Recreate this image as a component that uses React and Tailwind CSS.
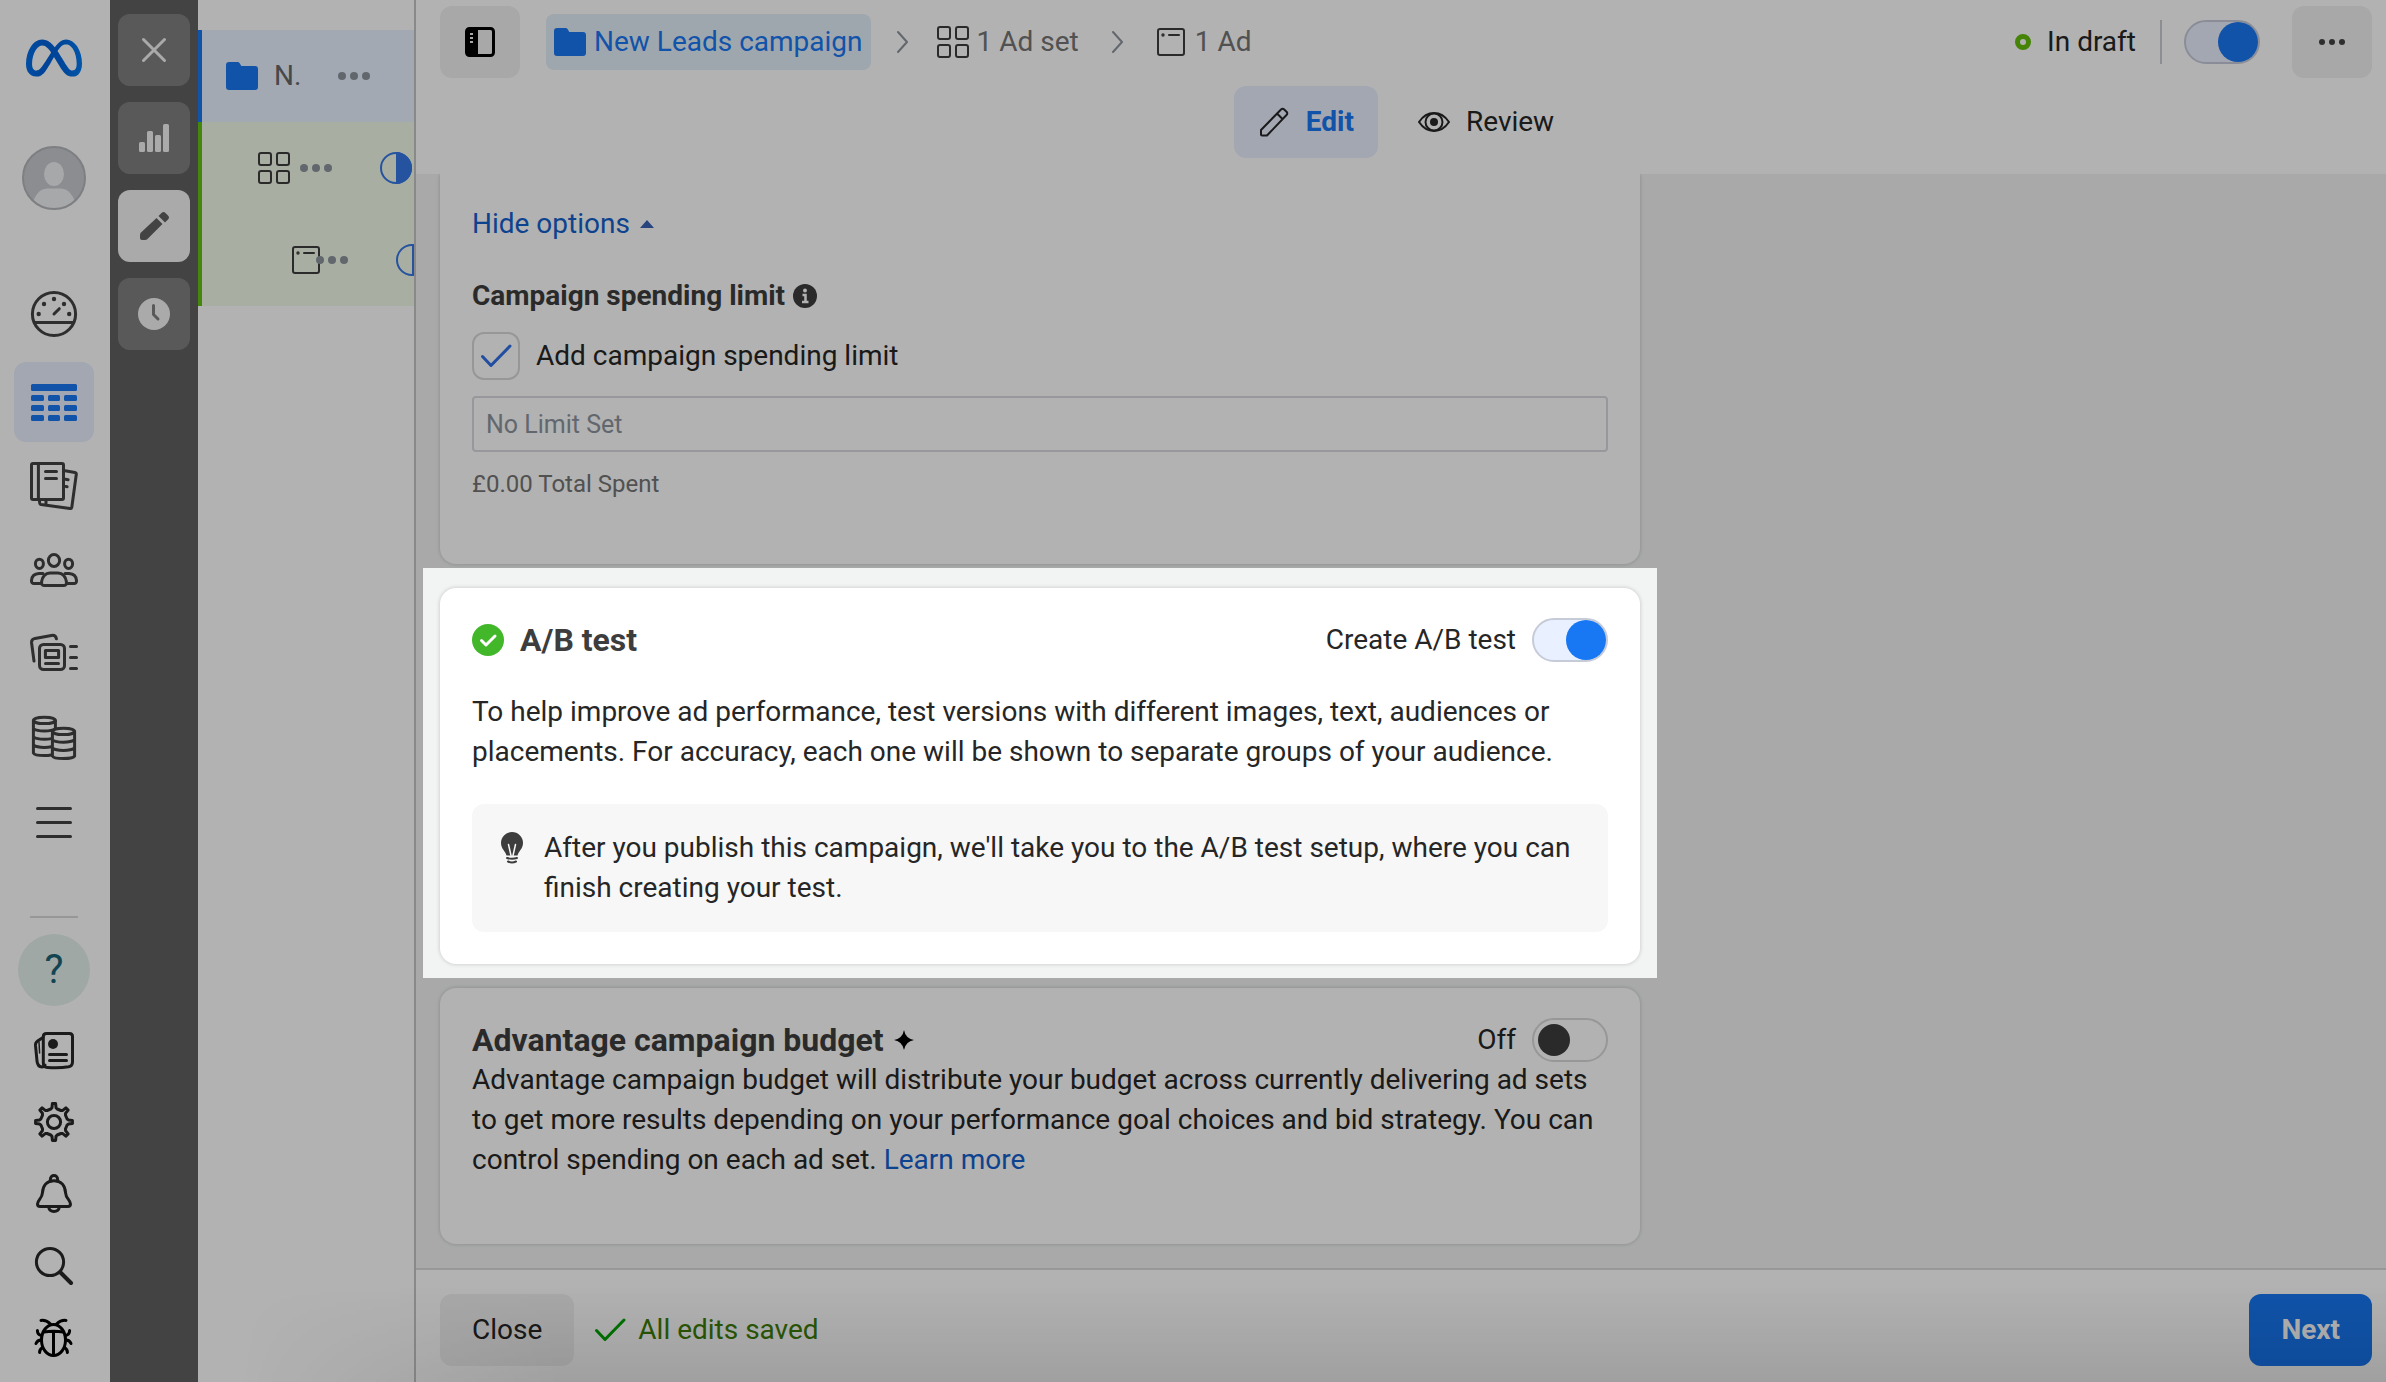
import React, { useState } from "react";
import { SiMeta } from "react-icons/si";

const Icon = ({ children, box = 48, width = 3, className = "w-12 h-12" }) => (
  <svg
    viewBox={`0 0 ${box} ${box}`}
    fill="none"
    stroke="currentColor"
    strokeWidth={width}
    strokeLinecap="round"
    strokeLinejoin="round"
    className={`shrink-0 ${className}`}
    aria-hidden="true"
  >
    {children}
  </svg>
);

const GaugeIcon = () => (
  <Icon>
    <circle cx="24" cy="24" r="21.6" />
    <path d="M5 32.4H43M24 24l5.3-5.3" />
    <g fill="currentColor" stroke="none">
      <circle cx="8.7" cy="24" r="2.2" />
      <circle cx="14" cy="14" r="2.2" />
      <circle cx="24" cy="9" r="2.2" />
      <circle cx="34" cy="14" r="2.2" />
      <circle cx="39.2" cy="24" r="2.2" />
    </g>
  </Icon>
);

const TableIcon = () => (
  <Icon>
    <g fill="currentColor" stroke="none">
      <rect x="1" y="6" width="46" height="7" rx="1.5" />
      {[17, 27, 37].map((y) => (
        <g key={y}>
          <rect x="1" y={y} width="13" height="6" rx="1.5" />
          <rect x="18" y={y} width="12" height="6" rx="1.5" />
          <rect x="34" y={y} width="13" height="6" rx="1.5" />
        </g>
      ))}
    </g>
  </Icon>
);

const BooksIcon = () => (
  <Icon>
    <rect x="1.5" y="1.5" width="32" height="36" rx="1.5" />
    <path d="M8.4 1.5v36M15.5 9.4H26.5M15.5 16.4H26.5" />
    <path d="M35 8.8l10 1.7q1.5.3 1.3 1.8L41.8 45.2q-.3 1.5-1.8 1.3L11 42.6q-1.5-.4-1.5-3.4M16 39v3M35.5 17.2l2.6.5M35.5 24.4l1.6.3" />
  </Icon>
);

const PeopleIcon = () => (
  <Icon>
    <ellipse cx="24" cy="14.4" rx="5.6" ry="6" />
    <ellipse cx="9.4" cy="17.8" rx="4" ry="4.6" />
    <ellipse cx="38.6" cy="17.8" rx="4" ry="4.6" />
    <path d="M14 39.6H34q2.8-.2 2.4-4Q35 27.4 28 27H20q-7 .4-8.4 8.6-.4 3.8 2.4 4Z" />
    <path d="M13 27.6H9Q2 28 1.5 34.5 1.4 37.4 4 37.4H11M35 27.6H39Q46 28 46.5 34.5 46.6 37.4 44 37.4H37" />
  </Icon>
);

const CollectionsIcon = () => (
  <Icon>
    <rect x="9.5" y="14.5" width="25" height="25" rx="4" />
    <rect x="15.4" y="20.4" width="13.2" height="7.2" />
    <path d="M15.5 33.4H28.5M40.5 16.4H46.5M40.5 27.4H46.5M40.5 38.4H46.5" />
    <path d="M26.4 8.8q-.6-4-5-3.4L5 8.4Q1.2 9.2 1.6 13L4 31" />
  </Icon>
);

const CoinsIcon = () => (
  <Icon>
    <ellipse cx="14.4" cy="6.4" rx="11" ry="3.2" />
    <path d="M3.4 6.4V39q1 2.6 11 2.6 4 0 6.6-.6M25.4 6.4V14M3.4 14.6q3 2.4 11 2.4t11-2.4M3.4 22.8q3 2.4 11 2.4 4 0 7-.6M3.4 31q3 2.4 11 2.4 4 0 7-.6" />
    <ellipse cx="33.5" cy="17.4" rx="11.1" ry="3.2" />
    <path d="M22.4 17.4V42q1 2.6 11 2.6t11.2-2.6V17.4M22.4 25.8q3 2.4 11 2.4t11.2-2.4M22.4 34q3 2.4 11 2.4T44.6 34" />
  </Icon>
);

const MenuIcon = () => (
  <Icon>
    <path d="M7.5 10.5H40.5M7.5 24.5H40.5M7.5 38.5H40.5" />
  </Icon>
);

const NewsIcon = () => (
  <Icon>
    <path d="M16.5 7.5H39.5q3 0 3 3V36q0 4-4 4.8-9 1.4-21 .6-4.2-.2-4.2-4.4V10.5q0-3 3.2-3Z" />
    <path d="M13 11.4L7.6 15Q5.3 16.6 5.5 19.4L7 35q.6 5.8 5 5.9 2 0 3-1.9" />
    <path d="M9 16L9.6 27" strokeWidth="1.5" />
    <path d="M19.5 28.5H36.5M19.5 34.5H36.5" />
    <circle cx="23" cy="18" r="5" fill="currentColor" stroke="none" />
  </Icon>
);

const gearPath = () => {
  const points = [];
  const steps = [
    [-14, 13.4],
    [-8, 14.5],
    [-5, 18.5],
    [5, 18.5],
    [8, 14.5],
    [14, 13.4],
  ];
  for (let i = 0; i < 8; i++) {
    steps.forEach(([offset, radius]) => {
      const angle = ((i * 45 + offset) * Math.PI) / 180;
      const x = 24 + radius * Math.sin(angle);
      const y = 24 - radius * Math.cos(angle);
      points.push(`${x.toFixed(2)} ${y.toFixed(2)}`);
    });
  }
  return `M${points.join("L")}Z`;
};

const GearIcon = () => (
  <Icon>
    <path d={gearPath()} />
    <circle cx="24" cy="24" r="6.6" />
  </Icon>
);

const BellIcon = () => (
  <Icon>
    <path d="M24 10.8C16.5 10.8 12.8 16 12.4 23 12.2 28.5 7.5 30 7.5 34q0 2.6 2.6 2.6H37.9q2.6 0 2.6-2.6C40.5 30 35.8 28.5 35.6 23 35.2 16 31.5 10.8 24 10.8Z" />
    <path d="M20.4 11V9a3.6 3.6 0 0 1 7.2 0V11M18.6 37a5.5 5.5 0 0 0 10.8 0" />
  </Icon>
);

const SearchIcon = () => (
  <Icon>
    <circle cx="20" cy="20" r="13.6" />
    <path d="M30.5 30.5L41 41" strokeWidth="4" />
  </Icon>
);

const BugIcon = () => (
  <Icon>
    <ellipse cx="23.5" cy="26" rx="12" ry="15.6" />
    <path d="M13.5 18q10-1.6 20 0M23.5 18V41M11 6.4q5-.6 9.5 3.6M36 6.4q-5-.6-9.5 3.6" />
    <path d="M7.4 16.6q0 4.4 4.4 5M39.6 16.6q0 4.4-4.4 5M11 26q-3.5 0-5 3.5M36 26q3.5 0 5 3.5M12.6 33.5q-3.2 2-3 5M34.4 33.5q3.2 2 3 5" />
  </Icon>
);

const FolderIcon = () => (
  <svg viewBox="0 0 32 28" className="w-8 h-7 shrink-0" fill="currentColor" aria-hidden="true">
    <path d="M3 0h8.5q1.5 0 2.2 1.2L15.3 4H29q3 0 3 3V25q0 3-3 3H3q-3 0-3-3V3Q0 0 3 0Z" />
  </svg>
);

const AdSetIcon = () => (
  <Icon box={32} width={2} className="w-8 h-8">
    <rect x="1" y="1" width="12" height="12" rx="2" />
    <rect x="19" y="1" width="12" height="12" rx="2" />
    <rect x="1" y="19" width="12" height="12" rx="2" />
    <rect x="19" y="19" width="12" height="12" rx="2" />
  </Icon>
);

const AdIcon = () => (
  <Icon box={28} width={2} className="w-7 h-7">
    <rect x="1" y="1" width="26" height="26" rx="2" />
    <path d="M12 7H22" />
    <circle cx="6" cy="7" r=".7" />
  </Icon>
);

const ChevronIcon = () => (
  <Icon box={24} width={2} className="w-6 h-6 text-[#8d949e]">
    <path d="M7 2l9 10-9 10" />
  </Icon>
);

const DotsIcon = () => (
  <svg viewBox="0 0 32 8" className="w-8 h-2 shrink-0 text-[#8d949e]" fill="currentColor" aria-hidden="true">
    <circle cx="4" cy="4" r="4" />
    <circle cx="16" cy="4" r="4" />
    <circle cx="28" cy="4" r="4" />
  </svg>
);

const HalfCircleIcon = () => (
  <svg viewBox="0 0 32 32" className="w-8 h-8 shrink-0 text-[#3578e5]" aria-hidden="true">
    <circle cx="16" cy="16" r="15" fill="none" stroke="currentColor" strokeWidth="2" />
    <path d="M16 0a16 16 0 0 1 0 32Z" fill="currentColor" />
  </svg>
);

const CheckIcon = ({ className }) => (
  <Icon box={32} width={3} className={`w-8 h-8 ${className}`}>
    <path d="M2.5 16.5L11 25.5 30 6" />
  </Icon>
);

const Toggle = ({ label, defaultChecked }) => {
  const [on, setOn] = useState(defaultChecked);

  return (
    <input
      type="checkbox"
      role="switch"
      aria-label={label}
      checked={on}
      onChange={(e) => setOn(e.target.checked)}
      className="appearance-none flex items-center shrink-0 w-[76px] h-11 rounded-full border-2 border-[#d8d8d8] bg-white before:block before:w-8 before:h-8 before:ml-1 before:rounded-full before:bg-[#3d3d3d] checked:border-[#c6cbd8] checked:bg-[#e9f0ff] checked:before:w-10 checked:before:h-10 checked:before:ml-8 checked:before:bg-[#1877f2]"
    />
  );
};

const mainLinks = [
  { name: "Campaigns", icon: <TableIcon />, active: true },
  { name: "Reporting", icon: <BooksIcon /> },
  { name: "Audiences", icon: <PeopleIcon /> },
  { name: "Ads library", icon: <CollectionsIcon /> },
  { name: "Billing", icon: <CoinsIcon /> },
  { name: "All tools", icon: <MenuIcon /> },
];

const footerLinks = [
  { name: "News", icon: <NewsIcon /> },
  { name: "Settings", icon: <GearIcon /> },
  { name: "Notifications", icon: <BellIcon /> },
  { name: "Search", icon: <SearchIcon /> },
];

const NavRail = () => (
  <nav className="flex flex-col items-center shrink-0 w-[110px] pt-7 pb-2 pr-0.5 bg-white text-[#424242]">
    <svg className="w-0 h-0" aria-hidden="true">
      <linearGradient id="metaBlue" x1="0" y1="0" x2="1" y2="0">
        <stop offset="0" stopColor="#0070ea" />
        <stop offset="0.35" stopColor="#0060d8" />
        <stop offset="0.7" stopColor="#0068e0" />
        <stop offset="1" stopColor="#007cf4" />
      </linearGradient>
    </svg>
    <a href="#home" aria-label="Meta" className="flex items-center h-[60px]">
      <SiMeta className="w-14 h-14 fill-[url(#metaBlue)]" />
    </a>
    <button aria-label="Account" className="mt-[58px] w-16 h-16">
      <svg viewBox="0 0 64 64" className="w-16 h-16" aria-hidden="true">
        <clipPath id="avatarClip">
          <circle cx="32" cy="32" r="31" />
        </clipPath>
        <circle cx="32" cy="32" r="31" fill="#c8cacf" />
        <g clipPath="url(#avatarClip)" fill="#f0f1f3">
          <ellipse cx="32" cy="28" rx="10" ry="12" />
          <path d="M10 60q4-17 15-17.5h14q11 .5 15 17.5v6H10Z" />
        </g>
        <circle cx="32" cy="32" r="31" fill="none" stroke="#b4b6ba" strokeWidth="2" />
      </svg>
    </button>
    <a href="#overview" aria-label="Overview" className="flex items-center mt-[58px] h-[92px]">
      <GaugeIcon />
    </a>
    {mainLinks.map((link) => (
      <div key={link.name} className="flex items-center h-[84px]">
        <a
          href="#tools"
          aria-label={link.name}
          className={
            link.active
              ? "flex items-center justify-center w-20 h-20 rounded-xl bg-[#e9f0ff] text-[#1877f2]"
              : "flex items-center justify-center w-20 h-20"
          }
        >
          {link.icon}
        </a>
      </div>
    ))}
    <div className="w-12 h-0.5 mt-auto mb-4 bg-[#d8d8d8]" />
    <button className="flex items-center justify-center w-[72px] h-[72px] mb-2 rounded-full bg-[#e4f1ec] text-[40px] text-[#1a6474]">
      ?
    </button>
    {footerLinks.map((link) => (
      <button key={link.name} aria-label={link.name} className="flex items-center justify-center w-[72px] h-[72px] text-[#282828]">
        {link.icon}
      </button>
    ))}
    <button aria-label="Report a problem" className="flex items-center justify-center w-[72px] h-[72px] text-black">
      <BugIcon />
    </button>
  </nav>
);

const ToolRail = () => (
  <div className="flex flex-col items-center gap-4 shrink-0 w-[88px] pt-3.5 bg-[#616161] text-[#f4f4f4]">
    <button aria-label="Close editor" className="flex items-center justify-center w-[72px] h-[72px] rounded-xl bg-[#808080]">
      <Icon box={32} width={3} className="w-8 h-8">
        <path d="M5.5 5.5l21 21M26.5 5.5l-21 21" />
      </Icon>
    </button>
    <button aria-label="Charts" className="flex items-center justify-center w-[72px] h-[72px] rounded-xl bg-[#808080]">
      <svg viewBox="0 0 32 32" className="w-8 h-8" fill="currentColor" aria-hidden="true">
        <rect x="1" y="20" width="6" height="10" rx="1.5" />
        <rect x="9" y="9" width="6" height="21" rx="1.5" />
        <rect x="17" y="13" width="6" height="17" rx="1.5" />
        <rect x="25" y="2" width="6" height="28" rx="1.5" />
      </svg>
    </button>
    <button aria-label="Edit" className="flex items-center justify-center w-[72px] h-[72px] rounded-xl bg-[#f4f4f4] text-[#616161]">
      <svg viewBox="0 0 32 32" className="w-8 h-8" fill="currentColor" aria-hidden="true">
        <path d="M18.5 8l6 6L9.5 29q-1 1-2.5 1H4q-2 0-2-2V25q0-1.5 1-2.5Z" />
        <path d="M20.5 6l3-3q2-2 4 0l2.5 2.5q2 2 0 4l-3 3Z" />
      </svg>
    </button>
    <button aria-label="History" className="flex items-center justify-center w-[72px] h-[72px] rounded-xl bg-[#808080]">
      <svg viewBox="0 0 32 32" className="w-8 h-8" aria-hidden="true">
        <circle cx="16" cy="16" r="16" fill="currentColor" />
        <path d="M15.5 7.5V16.5l4.5 4.5" fill="none" stroke="#808080" strokeWidth="3" strokeLinecap="round" strokeLinejoin="round" />
      </svg>
    </button>
  </div>
);

const CampaignTree = () => (
  <aside className="shrink-0 w-[218px] pt-[30px] overflow-hidden bg-white border-r-2 border-[#c4c4c6]">
    <div className="flex items-center h-[92px] pl-6 border-l-4 border-[#1877f2] bg-[#e9f3ff]">
      <span className="text-[#1877f2]">
        <FolderIcon />
      </span>
      <span className="w-16 ml-4 text-[#65676b]">N.</span>
      <DotsIcon />
    </div>
    <div className="flex items-center h-[92px] pl-14 border-l-4 border-[#63c114] bg-[#f2f9e9] text-[#3d3d3d]">
      <AdSetIcon />
      <div className="ml-2.5 mr-12">
        <DotsIcon />
      </div>
      <HalfCircleIcon />
    </div>
    <div className="flex items-center h-[92px] pl-[90px] border-l-4 border-[#63c114] bg-[#f2f9e9] text-[#3d3d3d]">
      <AdIcon />
      <div className="-ml-1 mr-12">
        <DotsIcon />
      </div>
      <HalfCircleIcon />
    </div>
  </aside>
);

const Header = () => (
  <header className="relative h-[174px] pt-1.5 pl-6 pr-3.5 bg-white">
    <div className="flex items-center h-[72px]">
      <button aria-label="Toggle sidebar" className="flex items-center justify-center w-20 h-[72px] rounded-xl bg-[#f1f1f1] text-black">
        <Icon box={32} width={3} className="w-8 h-8">
          <rect x="2.5" y="2.5" width="27" height="27" rx="3" />
          <path d="M3 3h11v26H3Z" fill="currentColor" stroke="none" />
          <path d="M6 8H9M6 12H9M6 16H9" stroke="#f1f1f1" strokeWidth="2" strokeLinecap="butt" />
        </Icon>
      </button>
      <a href="#campaign" className="flex items-center gap-2 h-14 ml-[26px] px-2 rounded-lg bg-[#e4f0fa] text-[#1877f2]">
        <FolderIcon />
        New Leads campaign
      </a>
      <div className="mx-5">
        <ChevronIcon />
      </div>
      <a href="#adset" className="flex items-center gap-2 ml-0.5 text-[#757575]">
        <span className="text-[#3d3d3d]">
          <AdSetIcon />
        </span>
        1 Ad set
      </a>
      <div className="mx-[27px]">
        <ChevronIcon />
      </div>
      <a href="#ad" className="flex items-center gap-2.5 text-[#757575]">
        <span className="text-[#3d3d3d]">
          <AdIcon />
        </span>
        1 Ad
      </a>
      <div className="flex items-center ml-auto">
        <span className="w-4 h-4 mr-4 rounded-full border-[5px] border-[#63be09]" />
        In draft
        <span className="w-0.5 h-11 ml-6 mr-[22px] bg-[#c9ccd1]" />
        <Toggle label="Campaign status" defaultChecked={true} />
        <button aria-label="More options" className="flex items-center justify-center gap-1 w-20 h-[72px] ml-8 rounded-xl bg-[#f1f1f1]">
          <span className="w-1.5 h-1.5 rounded-full bg-[#424242]" />
          <span className="w-1.5 h-1.5 rounded-full bg-[#424242]" />
          <span className="w-1.5 h-1.5 rounded-full bg-[#424242]" />
        </button>
      </div>
    </div>
    <div className="flex justify-center gap-4 mt-2">
      <button className="flex items-center gap-4 h-[72px] px-6 rounded-xl bg-[#e9f0ff] font-bold text-[#1877f2]">
        <Icon box={32} width={2} className="w-8 h-8 text-[#262626]">
          <path d="M3 24L23 3.5q1.6-1.6 3.200 0l2.300 2.300q1.600 1.600 0 3.200L9 29.500H4Q3 29.500 3 28.500ZM19 7.500l5.500 5.500" />
        </Icon>
        Edit
      </button>
      <button className="flex items-center gap-4 h-[72px] px-6">
        <Icon box={32} width={2} className="w-8 h-8">
          <path d="M1 16Q7 7 16 7T31 16Q25 25 16 25T1 16Z" />
          <circle cx="16" cy="16" r="8.500" />
          <circle cx="16" cy="16" r="4" fill="currentColor" stroke="none" />
        </Icon>
        Review
      </button>
    </div>
  </header>
);

const SpendingLimitCard = () => (
  <section className="px-8 pt-[30px] pb-16 rounded-b-2xl bg-white shadow-[0_0_4px_rgba(0,0,0,0.2)]">
    <button className="flex items-center gap-2.5 h-10 text-[#1461cc]">
      Hide options
      <svg viewBox="0 0 14 8" className="w-3.5 h-2" fill="#3a62b5" aria-hidden="true">
        <path d="M7 0l7 8H0Z" />
      </svg>
    </button>
    <h3 className="flex items-center gap-2 h-10 mt-8 font-bold text-[#3d3d3d]">
      Campaign spending limit
      <svg viewBox="0 0 24 24" className="w-6 h-6" aria-hidden="true">
        <circle cx="12" cy="12" r="12" fill="currentColor" />
        <circle cx="12" cy="6.5" r="2" fill="white" />
        <path d="M9.5 11H12.5V18M9 18H15.5" fill="none" stroke="white" strokeWidth="2.5" />
      </svg>
    </h3>
    <div className="flex items-center gap-4 mt-4">
      <div className="relative w-12 h-12">
        <input id="addLimit" type="checkbox" defaultChecked className="peer block appearance-none w-12 h-12 rounded-xl border-2 border-[#d8d8d8]" />
        <div className="hidden peer-checked:block absolute inset-2 pointer-events-none text-[#3070e6]">
          <CheckIcon />
        </div>
      </div>
      <label htmlFor="addLimit">Add campaign spending limit</label>
    </div>
    <input
      type="text"
      aria-label="Spending limit"
      placeholder="No Limit Set"
      className="block w-full h-14 mt-4 px-3 rounded-sm border-2 border-[#d8dade] text-[25px] placeholder:text-[#8d949e]"
    />
    <p className="mt-4 text-2xl leading-8 text-[#757575]">£0.00 Total Spent</p>
  </section>
);

const AbTestCard = () => (
  // everything outside this frame is dimmed by its spread shadow
  <div className="relative z-10 mt-1 -mx-[17px] px-[17px] pt-5 pb-3.5 bg-[#f2f4f4] shadow-[0_0_0_4000px_rgba(0,0,0,0.3)]">
    <section className="p-8 rounded-2xl bg-white shadow-[0_0_4px_rgba(0,0,0,0.2)]">
      <div className="flex items-center h-10">
        <svg viewBox="0 0 32 32" className="w-8 h-8 mr-4" aria-hidden="true">
          <circle cx="16" cy="16" r="16" fill="#42b72a" />
          <path d="M9.5 16.5l4.5 4.5 9-9" fill="none" stroke="white" strokeWidth="3" strokeLinecap="round" strokeLinejoin="round" />
        </svg>
        <h2 className="text-[32px] font-bold text-[#3d3d3d]">A/B test</h2>
        <span className="ml-auto mr-4">Create A/B test</span>
        <Toggle label="Create A/B test" defaultChecked={true} />
      </div>
      <p className="mt-8">
        To help improve ad performance, test versions with different images, text, audiences or placements. For
        accuracy, each one will be shown to separate groups of your audience.
      </p>
      <div className="flex gap-4 mt-8 p-6 rounded-xl bg-[#f7f7f7]">
        <svg viewBox="0 0 32 32" className="w-8 h-8 mt-1 shrink-0 text-[#3d3d3d]" aria-hidden="true">
          <path
            d="M16 0a11 11 0 0 1 11 11c0 6-4.5 8-5.500 12.500h-11C9.500 19 5 17 5 11A11 11 0 0 1 16 0Z"
            fill="currentColor"
          />
          <path d="M12.500 12.500L15 23.500M19.500 12.500L17 23.500" fill="none" stroke="#f7f7f7" strokeWidth="1.5" strokeLinecap="round" />
          <path d="M11 26q5 1.500 10 0M12 29.500q4 2 8 0" fill="none" stroke="currentColor" strokeWidth="2" strokeLinecap="round" />
        </svg>
        <p>After you publish this campaign, we'll take you to the A/B test setup, where you can finish creating your test.</p>
      </div>
    </section>
  </div>
);

const BudgetCard = () => (
  <section className="mt-2.5 px-8 pt-8 pb-16 rounded-2xl bg-white shadow-[0_0_4px_rgba(0,0,0,0.2)]">
    <div className="flex items-center h-10">
      <h2 className="text-[32px] font-bold text-[#3d3d3d]">Advantage campaign budget</h2>
      <svg viewBox="0 0 20 20" className="w-5 h-5 ml-2.5" fill="black" aria-hidden="true">
        <path d="M10 0q1.5 8.5 10 10-8.5 1.5-10 10Q8.5 11.5 0 10 8.5 8.5 10 0Z" />
      </svg>
      <span className="ml-auto mr-4">Off</span>
      <Toggle label="Advantage campaign budget" defaultChecked={false} />
    </div>
    <p>
      Advantage campaign budget will distribute your budget across currently delivering ad sets to get more results
      depending on your performance goal choices and bid strategy. You can control spending on each ad set.{" "}
      <a href="#learn" className="text-[#1461cc]">
        Learn more
      </a>
    </p>
  </section>
);

const Footer = () => (
  <footer className="relative flex items-center h-[114px] pl-6 pr-3.5 pt-2 border-t-2 border-[#dadada] bg-white">
    <button className="h-[72px] px-8 rounded-xl bg-[#f1f1f1]">Close</button>
    <CheckIcon className="ml-5 text-[#00a400]" />
    <span className="ml-3 text-[#3d7d07]">All edits saved</span>
    <button className="h-[72px] ml-auto px-8 rounded-xl bg-[#1877f2] font-bold text-white">Next</button>
    <div className="absolute bottom-0 right-0 -left-44 h-24 z-20 pointer-events-none bg-linear-to-t from-black/10 to-transparent [mask-image:linear-gradient(to_right,transparent,black_320px)]" />
  </footer>
);

const App = () => {
  return (
    <div className="flex min-h-screen font-[Roboto,sans-serif] text-[28px] leading-10 text-[#262626]">
      <NavRail />
      <ToolRail />
      <CampaignTree />
      <div className="flex flex-col flex-1 min-w-0 bg-[#f2f3f3]">
        <Header />
        <main className="flex-1 pl-6 pr-6 pb-6">
          <div className="max-w-[1200px]">
            <SpendingLimitCard />
            <AbTestCard />
            <BudgetCard />
          </div>
        </main>
        <Footer />
      </div>
    </div>
  );
};

export default App;
